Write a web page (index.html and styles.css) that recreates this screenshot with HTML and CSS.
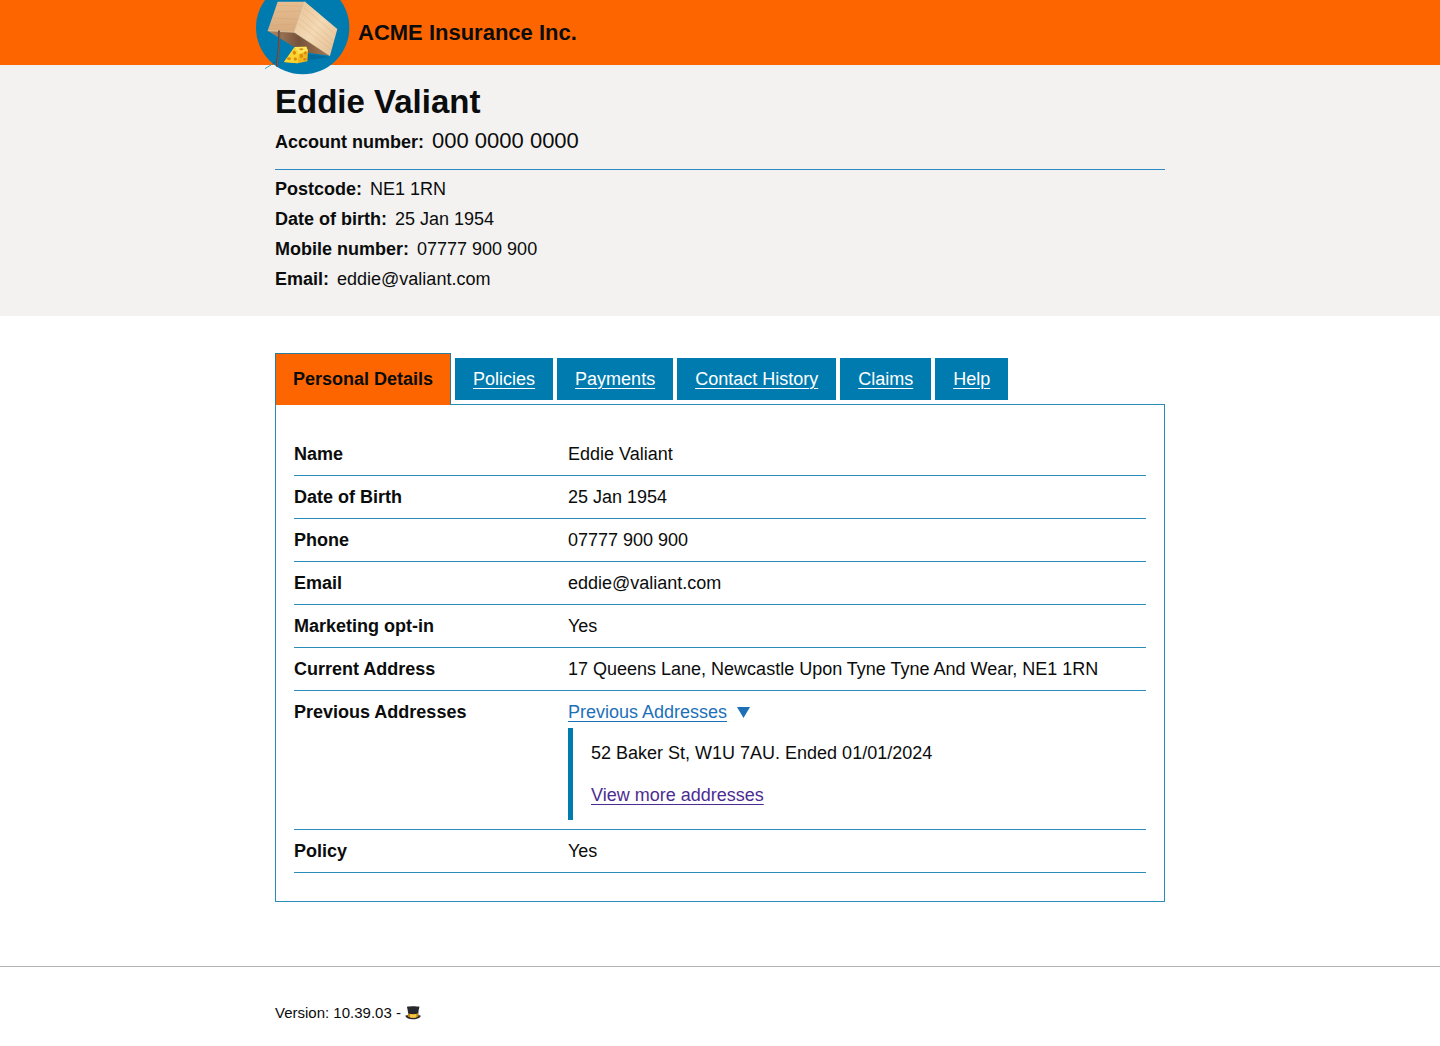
FILE: index.html
```html
<!DOCTYPE html>
<html lang="en">
<head>
    <meta charset="UTF-8">
    <meta name="viewport" content="width=device-width, initial-scale=1">
    <title>Eddie Valiant - ACME Insurance Inc.</title>
    <link rel="stylesheet" href="styles.css">
</head>
<body>
    <header class="header">
        <div class="container brand">
            <svg class="logo" viewBox="30 -57 285 285" aria-hidden="true">
                <defs>
                    <linearGradient id="side" x1="0" y1="0" x2="1" y2="1">
                        <stop offset="0" stop-color="#e8c195"/>
                        <stop offset="0.5" stop-color="#f3d9b5"/>
                        <stop offset="1" stop-color="#e3bd90"/>
                    </linearGradient>
                    <linearGradient id="front" x1="0" y1="0" x2="0" y2="1">
                        <stop offset="0" stop-color="#e6be92"/>
                        <stop offset="1" stop-color="#d8ab7e"/>
                    </linearGradient>
                    <linearGradient id="under" x1="0" y1="0" x2="1" y2="0">
                        <stop offset="0" stop-color="#b38a66"/>
                        <stop offset="0.5" stop-color="#76513a"/>
                        <stop offset="1" stop-color="#a87b54"/>
                    </linearGradient>
                </defs>
                <circle cx="173" cy="83" r="140" fill="#007bb0"/>
                <!-- shadow -->
                <path d="M184 162 254 170 240 174 188 180Z" fill="#006c9c"/>
                <!-- box -->
                <path d="M68 92 148 97 255 167 190 158 186 142 146 140Z" fill="url(#under)"/>
                <path d="M98 5H180L148 97 68 92Z" fill="url(#front)"/>
                <path d="M180 5 277 87 255 167 148 97Z" fill="url(#side)"/>
                <path d="M96 16 174 19M90 36 168 33M83 54 161 58M76 76 155 72" fill="none" stroke="#c79968" stroke-width="2" opacity="0.4"/>
                <path d="M176 22 271 103M170 38 266 122M164 55 262 137M158 70 259 150" fill="none" stroke="#cfa273" stroke-width="2" opacity="0.45"/>
                <path d="M68 92 148 97 255 167" fill="none" stroke="#f3d3a6" stroke-width="2"/>
                <path d="M180 5 148 97" fill="none" stroke="#f7dfbd" stroke-width="2"/>
                <!-- prop stick -->
                <path d="M102 92C105 125 99 160 96 200" fill="none" stroke="#584642" stroke-width="6"/>
                <path d="M103 94C105 125 100 160 97 198" fill="none" stroke="#8c695a" stroke-width="2"/>
                <path d="M60 206 82 192" fill="none" stroke="#4c9bb0" stroke-width="3"/>
                <path d="M82 192 96 182" fill="none" stroke="#244e63" stroke-width="2"/>
                <!-- cheese -->
                <path d="M117 186 149 141 184 140 189 152 187 184 158 190Z" fill="#f3b719"/>
                <path d="M117 186 149 141 162 162 158 190Z" fill="#fbd52f"/>
                <path d="M149 141 184 140 189 152 162 162Z" fill="#ffe55a"/>
                <g fill="#d98a12">
                    <ellipse cx="148" cy="158" rx="5" ry="6"/>
                    <ellipse cx="132" cy="176" rx="6" ry="4"/>
                    <ellipse cx="151" cy="177" rx="5" ry="5"/>
                    <ellipse cx="169" cy="168" rx="5" ry="6"/>
                    <ellipse cx="181" cy="159" rx="4" ry="5"/>
                    <ellipse cx="180" cy="178" rx="5" ry="4"/>
                    <ellipse cx="169" cy="148" rx="6" ry="3"/>
                </g>
            </svg>
            <span class="brand-name">ACME Insurance Inc.</span>
        </div>
    </header>

    <section class="summary">
        <div class="container">
            <h1>Eddie Valiant</h1>
            <p class="account"><strong>Account number:</strong> <span class="account-number">000 0000 0000</span></p>
            <ul class="facts">
                <li><strong>Postcode:</strong> <span>NE1 1RN</span></li>
                <li><strong>Date of birth:</strong> <span>25 Jan 1954</span></li>
                <li><strong>Mobile number:</strong> <span>07777 900 900</span></li>
                <li><strong>Email:</strong> <span>eddie@valiant.com</span></li>
            </ul>
        </div>
    </section>

    <main class="container main">
        <nav class="tabs" aria-label="Customer record">
            <a class="tab tab-selected" href="#personal-details" aria-current="page">Personal Details</a>
            <a class="tab" href="#policies">Policies</a>
            <a class="tab" href="#payments">Payments</a>
            <a class="tab" href="#contact-history">Contact History</a>
            <a class="tab" href="#claims">Claims</a>
            <a class="tab" href="#help">Help</a>
        </nav>

        <section class="panel" id="personal-details">
            <dl class="list">
                <div class="row">
                    <dt>Name</dt>
                    <dd>Eddie Valiant</dd>
                </div>
                <div class="row">
                    <dt>Date of Birth</dt>
                    <dd>25 Jan 1954</dd>
                </div>
                <div class="row">
                    <dt>Phone</dt>
                    <dd>07777 900 900</dd>
                </div>
                <div class="row">
                    <dt>Email</dt>
                    <dd>eddie@valiant.com</dd>
                </div>
                <div class="row">
                    <dt>Marketing opt-in</dt>
                    <dd>Yes</dd>
                </div>
                <div class="row">
                    <dt>Current Address</dt>
                    <dd>17 Queens Lane, Newcastle Upon Tyne Tyne And Wear, NE1 1RN</dd>
                </div>
                <div class="row">
                    <dt>Previous Addresses</dt>
                    <dd>
                        <details open>
                            <summary>
                                <span class="summary-text">Previous Addresses</span>
                                <svg class="arrow" viewBox="0 0 13 11" aria-hidden="true"><path d="M0 0H13L6.500 11Z" fill="currentColor"/></svg>
                            </summary>
                            <div class="details-text">
                                <p>52 Baker St, W1U 7AU. Ended 01/01/2024</p>
                                <p><a class="visited" href="#addresses">View more addresses</a></p>
                            </div>
                        </details>
                    </dd>
                </div>
                <div class="row">
                    <dt>Policy</dt>
                    <dd>Yes</dd>
                </div>
            </dl>
        </section>
    </main>

    <footer class="footer">
        <div class="container version">
            <span>Version: 10.39.03 -</span>
            <svg class="hat" viewBox="0 0 45 40" role="img" aria-label="Top hat">
                <path d="M1 27C8 25 37 25 44 27C46 31 38 38 23 38C8 38 0 32 1 27Z" fill="#2b2a30"/>
                <path d="M5 2C14 0 32 0 41 2C38 12 37 20 38 30C30 35 15 35 8 30C9 20 8 12 5 2Z" fill="#26282e"/>
                <path d="M8 20C15 25 30 25 37 20L38 30C30 35 15 35 8 30Z" fill="#c38a14"/>
                <path d="M14 23C20 24 26 24 32 23V32C26 34 20 34 14 32Z" fill="#f5c643"/>
            </svg>
        </div>
    </footer>
</body>
</html>
```

FILE: styles.css
```css
* {
    box-sizing: border-box;
}
body {
    margin: 0;
    font-family: "Liberation Sans", Arial, sans-serif;
    font-size: 18px;
    line-height: 24px;
    color: #0b0c0c;
    background: #fff;
}
p, ul, dl, dd {
    margin: 0;
    padding: 0;
}
.container {
    max-width: 890px;
    margin: 0 auto;
}

/* Header */
.header {
    height: 65px;
    background: #fc6500;
}
.brand {
    display: flex;
    align-items: center;
}
.logo {
    flex: none;
    width: 95px;
    height: 95px;
    margin: -19px 8px 0 -20px;
}
.brand-name {
    font-size: 22px;
    font-weight: bold;
    margin-top: -11px;
}

/* Customer summary */
.summary {
    padding: 17px 0 22px;
    background: #f3f2f1;
}
h1 {
    margin: 0;
    font-size: 33px;
    line-height: 40px;
}
.account {
    padding: 4px 0 12px;
    line-height: 30px;
    border-bottom: 1px solid #2b8cc4;
}
.account-number {
    margin-left: 3px;
    font-size: 22px;
}
.facts {
    padding-top: 4px;
    list-style: none;
    line-height: 30px;
}
.facts span {
    margin-left: 3px;
}

/* Tabs */
.main {
    padding-top: 37px;
}
.tabs {
    display: flex;
    align-items: center;
    gap: 4px;
}
.tab {
    padding: 9px 18px;
    color: #fff;
    background: #007bb0;
    text-underline-offset: 3px;
    text-decoration-thickness: 1px;
}
.tab-selected {
    margin-bottom: -1px;
    padding: 13px 17px 14px;
    color: #0b0c0c;
    background: #fc6500;
    border: 1px solid #2b7c9c;
    border-bottom: 0;
    font-weight: bold;
    text-decoration: none;
}
.panel {
    padding: 28px 18px;
    border: 1px solid #2b8cb8;
}
.row {
    display: grid;
    grid-template-columns: 274px 1fr;
    padding: 9px 0;
    border-bottom: 1px solid #2b8cb8;
}
dt {
    font-weight: bold;
}

/* Previous addresses */
summary {
    display: flex;
    align-items: center;
    gap: 10px;
    color: #1d70b8;
    list-style: none;
    cursor: pointer;
}
summary::-webkit-details-marker {
    display: none;
}
.summary-text {
    text-decoration: underline;
    text-decoration-thickness: 1px;
    text-underline-offset: 3px;
}
.arrow {
    width: 13px;
    height: 11px;
}
.details-text {
    display: grid;
    gap: 18px;
    margin-top: 4px;
    padding: 13px 18px;
    border-left: 5px solid #007bb0;
}
.visited {
    color: #4c2c92;
    text-decoration-thickness: 1px;
    text-underline-offset: 3px;
}

/* Footer */
.footer {
    margin-top: 64px;
    padding: 34px 0;
    border-top: 1px solid #b1b4b6;
    font-size: 15px;
}
.version {
    display: flex;
    align-items: center;
    gap: 4px;
}
.hat {
    width: 16px;
    height: 14px;
}
```
